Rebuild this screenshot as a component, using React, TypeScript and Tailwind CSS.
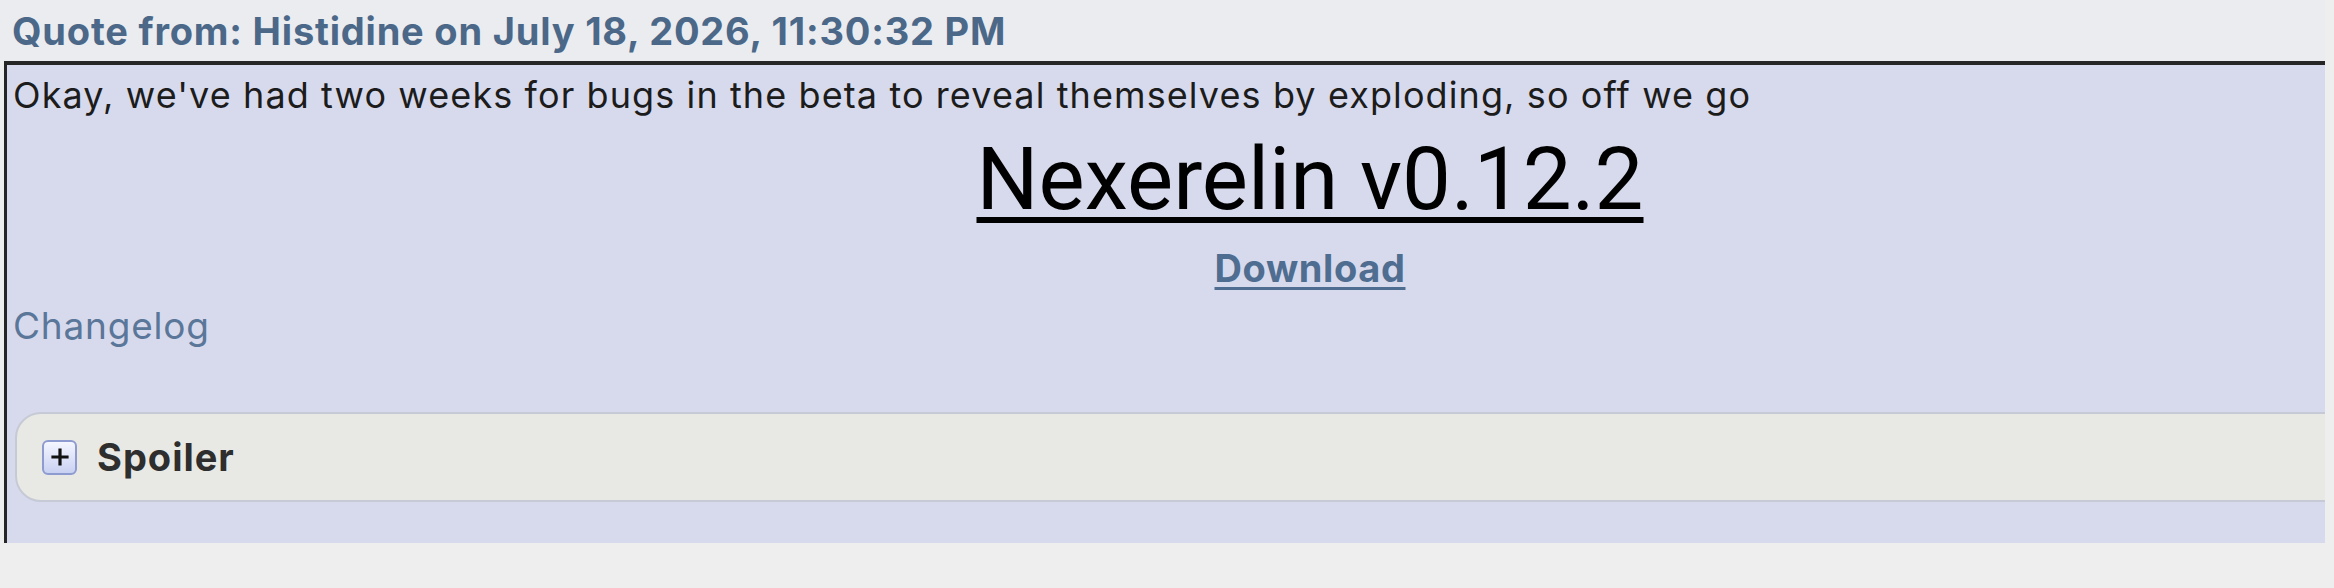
import React from 'react';

function PlusBox() {
  return (
    <span className="flex h-[35px] w-[35px] items-center justify-center rounded-[6px] border-2 border-[#8e9bd0] bg-gradient-to-b from-[#f4f6ff] to-[#c9d1f2]">
      <svg width="20" height="20" viewBox="0 0 20 20" aria-hidden="true">
        <path d="M10 3v14M3 10h14" stroke="#111" strokeWidth="3.2" strokeLinecap="square" />
      </svg>
    </span>
  );
}

export default function App() {
  return (
    <div className="flex h-[588px] w-[2334px] overflow-hidden bg-[#eeeeee] font-['Inter',sans-serif]">
      <div className="flex w-[2325px] flex-col">
        {/* quote header */}
        <div className="h-[61px] bg-[#ebecf0] pl-[12px] pt-[8px] text-[38px] font-bold leading-[46px] tracking-[0.8px] text-[#4b6889]">
          Quote from: Histidine on July 18, 2026, 11:30:32 PM
        </div>

        {/* quote body, wider than the window so the right side is cut off */}
        <div className="ml-[4px] h-[482px] overflow-hidden border-l-[3px] border-t-[4px] border-[#262626] bg-[#d7daec]">
          <div className="flex w-[2606px] flex-col">
            <p className="pl-[6px] pt-[8px] text-[36px] leading-[44px] tracking-[1.1px] text-[#1c1c1c]">
              Okay, we've had two weeks for bugs in the beta to reveal themselves by exploding, so off we go
            </p>

            <div className="mt-[14px] text-center">
              <span className="font-['Roboto',sans-serif] text-[87px] leading-[96px] text-black underline decoration-[6px] underline-offset-[8px]">
                Nexerelin v0.12.2
              </span>
            </div>

            <div className="mt-[18px] text-center">
              <a className="text-[38px] font-bold leading-[46px] tracking-[0.6px] text-[#4e6d90] underline decoration-[3px] underline-offset-[5px]">
                Download
              </a>
            </div>

            <a className="pl-[6px] pt-[12px] text-[37px] leading-[46px] tracking-[0.8px] text-[#5a7699]">Changelog</a>

            <div className="ml-[8px] mt-[63px] flex h-[90px] items-center gap-[20px] rounded-[26px] border-2 border-[#c6cad6] bg-[#e8e9e4] pl-[25px]">
              <PlusBox />
              <span className="text-[38px] font-bold tracking-[1px] text-[#2e2e2e]">Spoiler</span>
            </div>
          </div>
        </div>
      </div>
    </div>
  );
}
